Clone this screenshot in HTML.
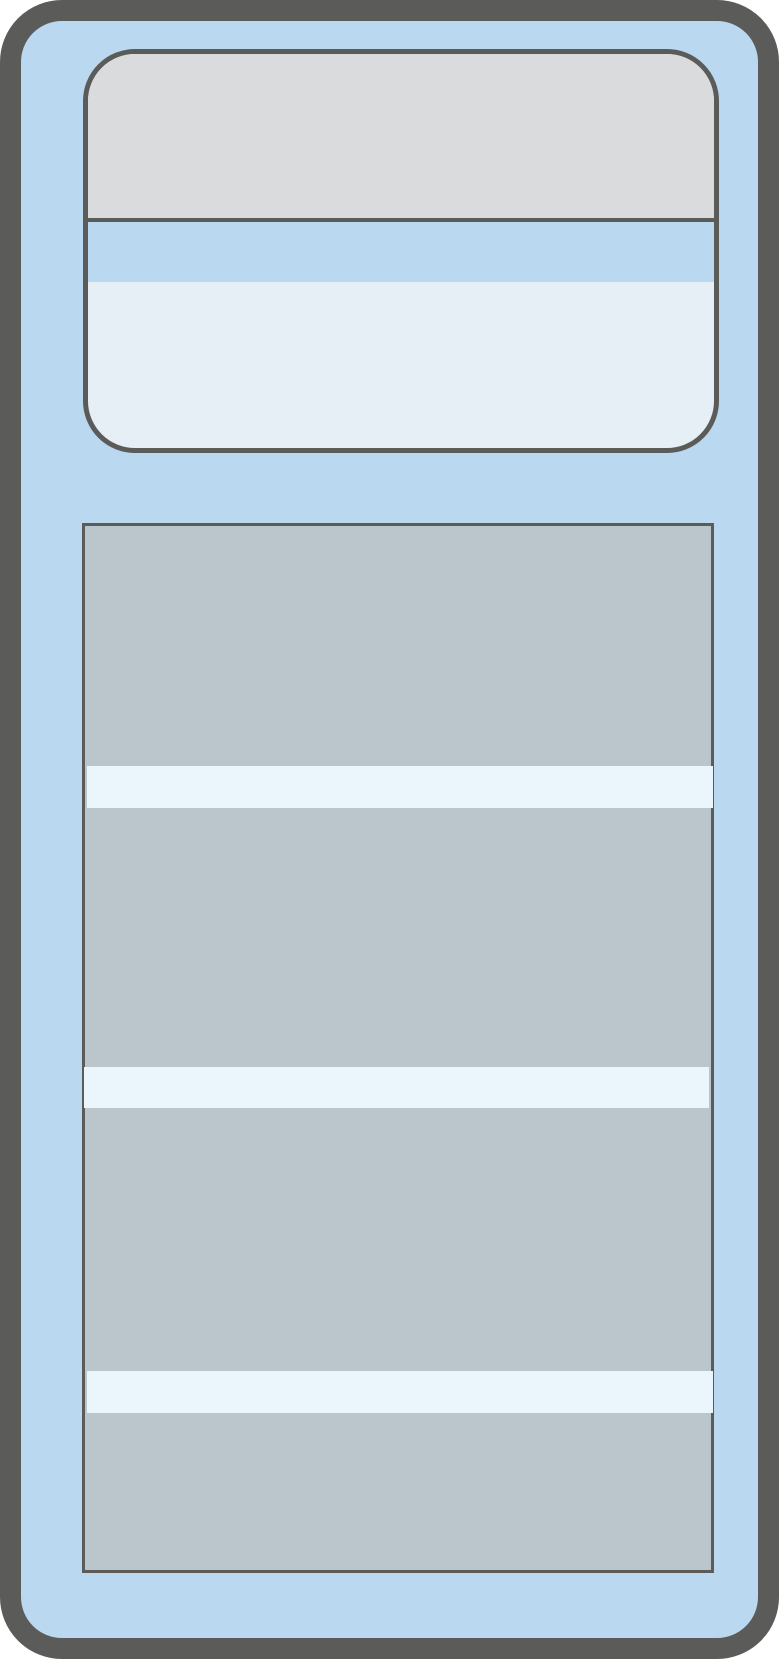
<!DOCTYPE html><html><head><style>
body{margin:0;width:780px;height:1660px;background:#fff;position:relative;overflow:hidden}
div{position:absolute;box-sizing:border-box}
</style></head><body>
<div style="left:0;top:0;width:779px;height:1659px;background:#bad9f0;border:21px solid #5b5b59;border-radius:62px"></div>
<div style="left:83px;top:49px;width:636px;height:404px;border:5px solid #5b5b59;border-radius:52px;overflow:hidden;background:#e6eef6">
 <div style="left:0;top:0;width:100%;height:168px;background:#dadbdd;border-bottom:4px solid #5b5b59"></div>
 <div style="left:0;top:168px;width:100%;height:60px;background:#bad9f0"></div>
</div>
<div style="left:82px;top:523px;width:632px;height:1050px;background:#bac5cc;border:3px solid #5b5b59"></div>
<div style="left:87px;top:766px;width:626px;height:42px;background:#eaf5fc"></div>
<div style="left:84px;top:1067px;width:625px;height:41px;background:#eaf5fc"></div>
<div style="left:87px;top:1371px;width:626px;height:42px;background:#eaf5fc"></div>
</body></html>
